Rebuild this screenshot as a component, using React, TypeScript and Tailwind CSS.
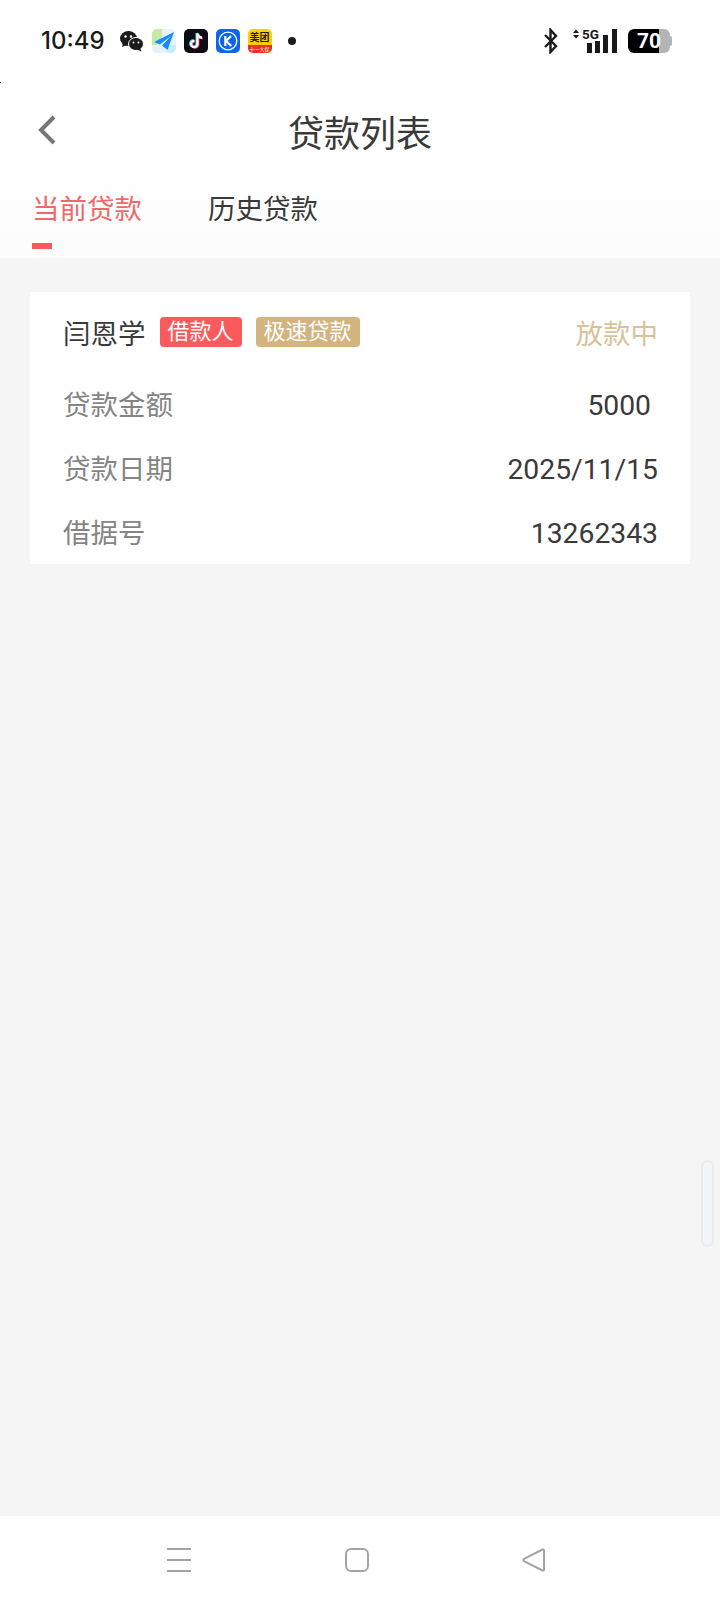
import React from 'react';

const cjk = "font-['Roboto','Noto_Sans_CJK_SC',sans-serif]";

const StatusIcons = () => (
  <div className="flex items-center">
    {/* wechat */}
    <svg width="24" height="22" viewBox="0 0 24 22" className="ml-[15px]">
      <ellipse cx="8.5" cy="8.5" rx="8.5" ry="7.5" fill="#1a1a1a" />
      <path d="M3 13l-1 4 5-2z" fill="#1a1a1a" />
      <ellipse cx="16" cy="14" rx="7.5" ry="6.5" stroke="#fff" strokeWidth="1" fill="#1a1a1a" />
      <path d="M20 18l1.500 3.500-4.500-2z" fill="#1a1a1a" />
      <circle cx="5.500" cy="6.500" r="1.200" fill="#fff" />
      <circle cx="11" cy="6.500" r="1.200" fill="#fff" />
      <circle cx="13.500" cy="12.500" r="1" fill="#fff" />
      <circle cx="18.500" cy="12.500" r="1" fill="#fff" />
    </svg>
    {/* plane */}
    <svg width="24" height="24" viewBox="0 0 24 24" className="ml-[8px]">
      <rect width="24" height="24" rx="5" fill="#e8f2f5" />
      <path d="M0 5a5 5 0 0 1 5-5h5v8l-5 8H0z" fill="#c4eba6" />
      <path d="M14 0h5a5 5 0 0 1 5 5v1h-9z" fill="#eef5f7" />
      <path d="M16 16h8v3a5 5 0 0 1-5 5h-4z" fill="#c8ecf6" />
      <path d="M22 3L2 13l6 2.500L19 7l-9 9.500 5.500 4.500z" fill="#1a8bf0" />
    </svg>
    {/* tiktok */}
    <svg width="24" height="24" viewBox="0 0 24 24" className="ml-[8px]">
      <rect width="24" height="24" rx="5" fill="#0c0c14" />
      <path d="M13.500 4.500v10.500a3.200 3.200 0 1 1-3.200-3.200M13.500 4.500c.4 2.500 2 4 4.500 4.200" fill="none" stroke="#25f4ee" strokeWidth="2.400" transform="translate(-.8 -.5)" />
      <path d="M13.500 4.500v10.500a3.200 3.200 0 1 1-3.200-3.200M13.500 4.500c.4 2.500 2 4 4.500 4.200" fill="none" stroke="#fe2c55" strokeWidth="2.400" transform="translate(.8 .5)" />
      <path d="M13.500 4.500v10.500a3.200 3.200 0 1 1-3.200-3.200M13.500 4.500c.4 2.500 2 4 4.500 4.200" fill="none" stroke="#fff" strokeWidth="2.200" />
    </svg>
    {/* K */}
    <svg width="24" height="24" viewBox="0 0 24 24" className="ml-[8px]">
      <rect width="24" height="24" rx="5" fill="#0b66ee" />
      <circle cx="12" cy="12" r="8.800" fill="none" stroke="#fff" strokeWidth="1.300" />
      <path d="M9.300 7v10M15 7l-5 5 5.300 5" fill="none" stroke="#fff" strokeWidth="2.200" />
    </svg>
    {/* meituan */}
    <div className="ml-[8px] w-[24px] h-[24px] rounded-[5px] overflow-hidden bg-[#fdd000] flex flex-col items-center">
      <span className="h-[16px] text-[10px] leading-[16px] font-bold text-[#1a1a1a] font-['Noto_Sans_CJK_SC',sans-serif]">美团</span>
      <span className="h-[8px] w-full bg-[#ee2e24] text-[5px] leading-[8px] text-center text-white font-['Noto_Sans_CJK_SC',sans-serif] whitespace-nowrap">十一大促</span>
    </div>
    <div className="ml-[16px] w-[8px] h-[8px] rounded-full bg-[#1a1a1a]" />
  </div>
);

const SystemIcons = () => (
  <div className="flex items-center">
    <svg width="16" height="26" viewBox="0 0 16 26">
      <path d="M2 7l11 11-5.500 6V2L13 8 2 19" fill="none" stroke="#1a1a1a" strokeWidth="2.400" />
    </svg>
    <div className="relative ml-[14px] w-[44px] h-[26px]">
      <svg width="44" height="26" viewBox="0 0 44 26" className="absolute inset-0">
        <path d="M0 5L3 1.500 6 5zM0 7l3 3.500L6 7z" fill="#1a1a1a" />
        <rect x="14" y="15" width="5" height="10" fill="#1a1a1a" />
        <rect x="22" y="13" width="5" height="12" fill="#1a1a1a" />
        <rect x="30" y="7" width="5" height="18" fill="#1a1a1a" />
        <rect x="39" y="1" width="5" height="24" fill="#1a1a1a" />
      </svg>
      <span className="absolute left-[9px] top-[0px] text-[13.5px] leading-[13px] font-bold text-[#1a1a1a] font-['Roboto',sans-serif]">5G</span>
    </div>
    <div className="relative ml-[11px] w-[44px] h-[24px] flex">
      <div className="w-[31px] h-[24px] bg-black rounded-l-[6px]" />
      <div className="w-[11px] h-[24px] bg-[#b5b5b5] rounded-r-[6px]" />
      <div className="w-[2px] h-[10px] mt-[7px] bg-[#b5b5b5] rounded-r-[2px]" />
      <span className="absolute left-[9px] top-0 text-[21px] leading-[24px] font-bold text-white font-['Roboto',sans-serif]">70</span>
    </div>
  </div>
);

const Row = ({ label, value, extra }: { label: string; value: string; extra?: string }) => (
  <div className="flex justify-between items-center h-[64px]">
    <span className="text-[27.5px] text-[#858585]">{label}</span>
    <span className={`text-[28.3px] text-[#3a3a3a] ${extra ?? ''}`}>{value}</span>
  </div>
);

export default function App() {
  return (
    <div className={`relative w-[720px] h-[1604px] flex flex-col bg-[#f5f5f5] overflow-hidden ${cjk}`}>
      <div className="absolute left-0 top-[82px] w-[1px] h-[1px] bg-black" />

      <header className="h-[258px] bg-gradient-to-b from-white from-60% to-[#fcfcfc]">
        <div className="h-[82px] pl-[41px] pr-[48px] flex items-center justify-between">
          <div className="flex items-center">
            <span className="text-[24px] font-medium text-[#1a1a1a] font-['Inter',sans-serif]">10:49</span>
            <StatusIcons />
          </div>
          <SystemIcons />
        </div>
        <div className="relative h-[92px] pt-[14px] flex items-center justify-center">
          <svg width="20" height="32" viewBox="0 0 20 32" className="absolute left-[37px] top-[32px]">
            <path d="M17 3L4 16l13 13" fill="none" stroke="#777777" strokeWidth="4" />
          </svg>
          <h1 className="text-[36px] text-[#3a3a3a] font-normal">贷款列表</h1>
        </div>
        <div className="flex pl-[32px] gap-[66px]">
          <div className="relative">
            <span className="text-[27.5px] leading-[72px] text-[#f0686a]">当前贷款</span>
            <div className="absolute left-0 top-[69px] w-[20px] h-[6px] bg-[#f8595c]" />
          </div>
          <span className="text-[27.5px] leading-[72px] text-[#3a3a3a]">历史贷款</span>
        </div>
      </header>

      <div className="mx-[30px] mt-[34px] h-[272px] bg-white pl-[33px] pr-[32px]">
        <div className="flex justify-between items-center h-[82px]">
          <div className="flex items-center">
            <span className="mt-[4px] text-[27.5px] text-[#3a3a3a]">闫恩学</span>
            <span className="ml-[14px] mb-[2px] h-[30px] px-[8px] rounded-[4px] bg-[#fb5a5c] text-white text-[22px] leading-[30px]">借款人</span>
            <span className="ml-[14px] mb-[2px] h-[30px] px-[8px] rounded-[4px] bg-[#d3b47f] text-white text-[22px] leading-[30px]">极速贷款</span>
          </div>
          <span className="mt-[4px] text-[27.5px] text-[#d9c297]">放款中</span>
        </div>
        <Row label="贷款金额" value="5000" extra="mr-[7px]" />
        <Row label="贷款日期" value="2025/11/15" />
        <Row label="借据号" value="13262343" />
      </div>

      {/* floating side pill */}
      <div className="absolute left-[701px] top-[1160px] w-[13px] h-[87px] rounded-full bg-[#f2f4fb] border-2 border-[#ebebeb]" />

      <nav className="mt-auto h-[88px] bg-white relative flex items-start pt-[32px]">
        <svg width="24" height="24" viewBox="0 0 24 24" className="ml-[167px]">
          <path d="M0 1h24M0 12h24M0 23h24" stroke="#a3a3a3" strokeWidth="2" />
        </svg>
        <svg width="24" height="24" viewBox="0 0 24 24" className="ml-[154px]">
          <rect x="1" y="1" width="22" height="22" rx="5" fill="none" stroke="#a3a3a3" strokeWidth="2" />
        </svg>
        <svg width="24" height="24" viewBox="0 0 24 24" className="ml-[153px]">
          <path d="M22 2.500a1 1 0 0 0-1.500-1L2 10.800a1.300 1.300 0 0 0 0 2.400l18.500 9.300a1 1 0 0 0 1.500-1z" fill="none" stroke="#a3a3a3" strokeWidth="2" />
        </svg>
      </nav>
    </div>
  );
}
